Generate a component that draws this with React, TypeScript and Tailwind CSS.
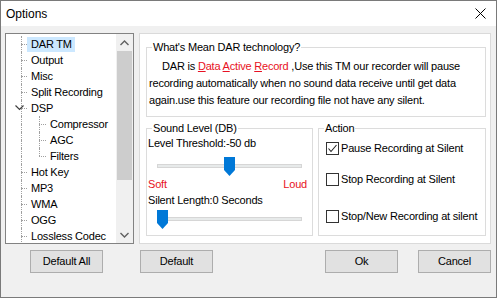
import React from "react";

const DOT = "border-dotted border-[#a0a0a0]";

type Row = { label: string; level: 1 | 2; selected?: boolean; expander?: boolean; last?: boolean };

const rows: Row[] = [
  { label: "DAR TM", level: 1, selected: true },
  { label: "Output", level: 1 },
  { label: "Misc", level: 1 },
  { label: "Split Recording", level: 1 },
  { label: "DSP", level: 1, expander: true },
  { label: "Compressor", level: 2 },
  { label: "AGC", level: 2 },
  { label: "Filters", level: 2, last: true },
  { label: "Hot Key", level: 1 },
  { label: "MP3", level: 1 },
  { label: "WMA", level: 1 },
  { label: "OGG", level: 1 },
  { label: "Lossless Codec", level: 1 },
];

function TreeRow({ r }: { r: Row }) {
  return (
    <div className="relative flex h-[16px] items-stretch">
      <div className="w-[15px] shrink-0" />
      <div className="flex w-[6px] shrink-0 flex-col">
        <div className={`h-[8px] border-l ${DOT}`} />
        <div className={`h-[8px] border-l ${DOT} ${r.level === 1 ? "border-t" : ""}`} />
      </div>
      {r.level === 2 && (
        <>
          <div className="w-[12px] shrink-0" />
          <div className="flex w-[7px] shrink-0 flex-col">
            <div className={`h-[8px] border-l ${DOT}`} />
            <div className={`h-[8px] border-t ${DOT} ${r.last ? "" : "border-l"}`} />
          </div>
        </>
      )}
      {r.expander && (
        <svg className="absolute left-[9px] top-[5px]" width="9" height="6" viewBox="0 0 9 6">
          <polyline points="0.5,0.5 4.5,4.5 8.5,0.5" fill="none" stroke="#404040" strokeWidth="1.2" />
        </svg>
      )}
      <div className="flex items-center">
        <span
          className={`h-[15px] pl-[4px] pr-[3px] leading-[15px] whitespace-nowrap ${
            r.selected ? "bg-[#cce8ff]" : ""
          }`}
        >
          {r.label}
        </span>
      </div>
    </div>
  );
}

function Chevron({ up }: { up?: boolean }) {
  return (
    <svg width="9" height="6" viewBox="0 0 9 6">
      <polyline
        points={up ? "0.5,5 4.5,1 8.5,5" : "0.5,1 4.5,5 8.5,1"}
        fill="none"
        stroke="#606060"
        strokeWidth="1.4"
      />
    </svg>
  );
}

function Slider({ pos }: { pos: number }) {
  return (
    <div className="relative ml-[9px] h-[19px] w-[145px]">
      <div className="absolute left-0 right-0 top-[7px] h-[4px] border border-[#d6d6d6] bg-[#e7eaea]" />
      <svg className="absolute top-0" style={{ left: pos }} width="11" height="19" viewBox="0 0 11 19">
        <polygon points="0,0 11,0 11,13 5.5,19 0,13" fill="#0078d7" />
      </svg>
    </div>
  );
}

function Check({ checked, label, className }: { checked?: boolean; label: string; className?: string }) {
  return (
    <div className={`flex h-[14px] items-center ${className ?? ""}`}>
      <div className="flex h-[13px] w-[13px] shrink-0 items-center justify-center border border-[#333333] bg-white">
        {checked && (
          <svg width="11" height="11" viewBox="0 0 11 11">
            <polyline points="1.5,5.5 4,8.5 9.5,2" fill="none" stroke="#222" strokeWidth="1.1" />
          </svg>
        )}
      </div>
      <span className="ml-[2px] whitespace-nowrap">{label}</span>
    </div>
  );
}

function Btn({ label }: { label: string }) {
  return (
    <div className="flex h-[23px] w-[73px] shrink-0 items-center justify-center border border-[#adadad] bg-[#e1e1e1]">
      {label}
    </div>
  );
}

export default function App() {
  return (
    <div className="flex h-[298px] w-[497px] flex-col border border-[#7a7a7a] bg-[#f0f0f0] font-['Liberation_Sans',Arial,sans-serif] text-[11px] tracking-[-0.2px] text-black">
      {/* title bar */}
      <div className="flex h-[25px] shrink-0 items-center justify-between bg-white pl-[5px] pr-[10px]">
        <span className="text-[12px] tracking-normal">Options</span>
        <svg width="11" height="11" viewBox="0 0 11 11">
          <line x1="0.5" y1="0.5" x2="10.5" y2="10.5" stroke="#000" strokeWidth="1" />
          <line x1="10.5" y1="0.5" x2="0.5" y2="10.5" stroke="#000" strokeWidth="1" />
        </svg>
      </div>

      {/* body */}
      <div className="flex flex-1 flex-col pl-[4px] pt-[7px]">
        <div className="flex h-[211px]">
          {/* tree */}
          <div className="flex w-[129px] shrink-0 border border-[#828282] bg-white">
            <div className="flex-1 overflow-hidden pt-[2px]">
              {rows.map((r) => (
                <TreeRow key={r.label} r={r} />
              ))}
            </div>
            <div className="flex w-[17px] shrink-0 flex-col bg-[#f0f0f0]">
              <div className="flex h-[17px] items-center justify-center">
                <Chevron up />
              </div>
              <div className="flex-1">
                <div className="mx-auto h-[129px] w-[15px] bg-[#cdcdcd]" />
              </div>
              <div className="flex h-[17px] items-center justify-center">
                <Chevron />
              </div>
            </div>
          </div>

          {/* right panel */}
          <div className="ml-[5px] flex w-[352px] shrink-0 flex-col border border-[#dadada] bg-white pl-[6px] pr-[4px] pt-[6px]">
            <fieldset className="w-[340px] border border-[#dcdcdc] pb-[7px]">
              <legend className="ml-[5px] px-[1px] leading-[14px]">What's Mean DAR technology?</legend>
              <p className="mt-[4px] pl-[2px] leading-[17px] whitespace-nowrap">
                <span className="pl-[13px]">DAR is </span>
                <span className="text-[#e81123]">
                  <u>D</u>ata <u>A</u>ctive <u>R</u>ecord
                </span>{" "}
                ,Use this TM our recorder will pause
                <br />
                recording automatically when no sound data receive until get data
                <br />
                again.use this feature our recording file not have any silent.
              </p>
            </fieldset>

            <div className="mt-[4px] flex gap-[5px]">
              <fieldset className="h-[115px] w-[167px] border border-[#dcdcdc]">
                <legend className="ml-[5px] px-[1px] leading-[14px]">Sound Level (DB)</legend>
                <div className="pl-[1px] pt-[1px]">
                  <div className="h-[14px] leading-[14px]">Level Threshold:-50 db</div>
                  <div className="mt-[7px]">
                    <Slider pos={67} />
                  </div>
                  <div className="mt-[1px] flex h-[14px] justify-between pr-[5px] leading-[14px] text-[#e81123]">
                    <span>Soft</span>
                    <span>Loud</span>
                  </div>
                  <div className="mt-[2px] h-[14px] leading-[14px]">Silent Length:0 Seconds</div>
                  <div className="mt-[3px]">
                    <Slider pos={0} />
                  </div>
                </div>
              </fieldset>

              <fieldset className="h-[115px] w-[168px] border border-[#dcdcdc]">
                <legend className="ml-[5px] px-[1px] leading-[14px]">Action</legend>
                <div className="pl-[7px]">
                  <Check className="mt-[6px]" checked label="Pause Recording at Silent" />
                  <Check className="mt-[17px]" label="Stop Recording at Silent" />
                  <Check className="mt-[23px]" label="Stop/New Recording at silent" />
                </div>
              </fieldset>
            </div>
          </div>
        </div>

        {/* buttons */}
        <div className="mt-[6px] flex pl-[25px]">
          <Btn label="Default All" />
          <div className="ml-[37px]">
            <Btn label="Default" />
          </div>
          <div className="ml-[112px]">
            <Btn label="Ok" />
          </div>
          <div className="ml-[20px]">
            <Btn label="Cancel" />
          </div>
        </div>
      </div>
    </div>
  );
}
